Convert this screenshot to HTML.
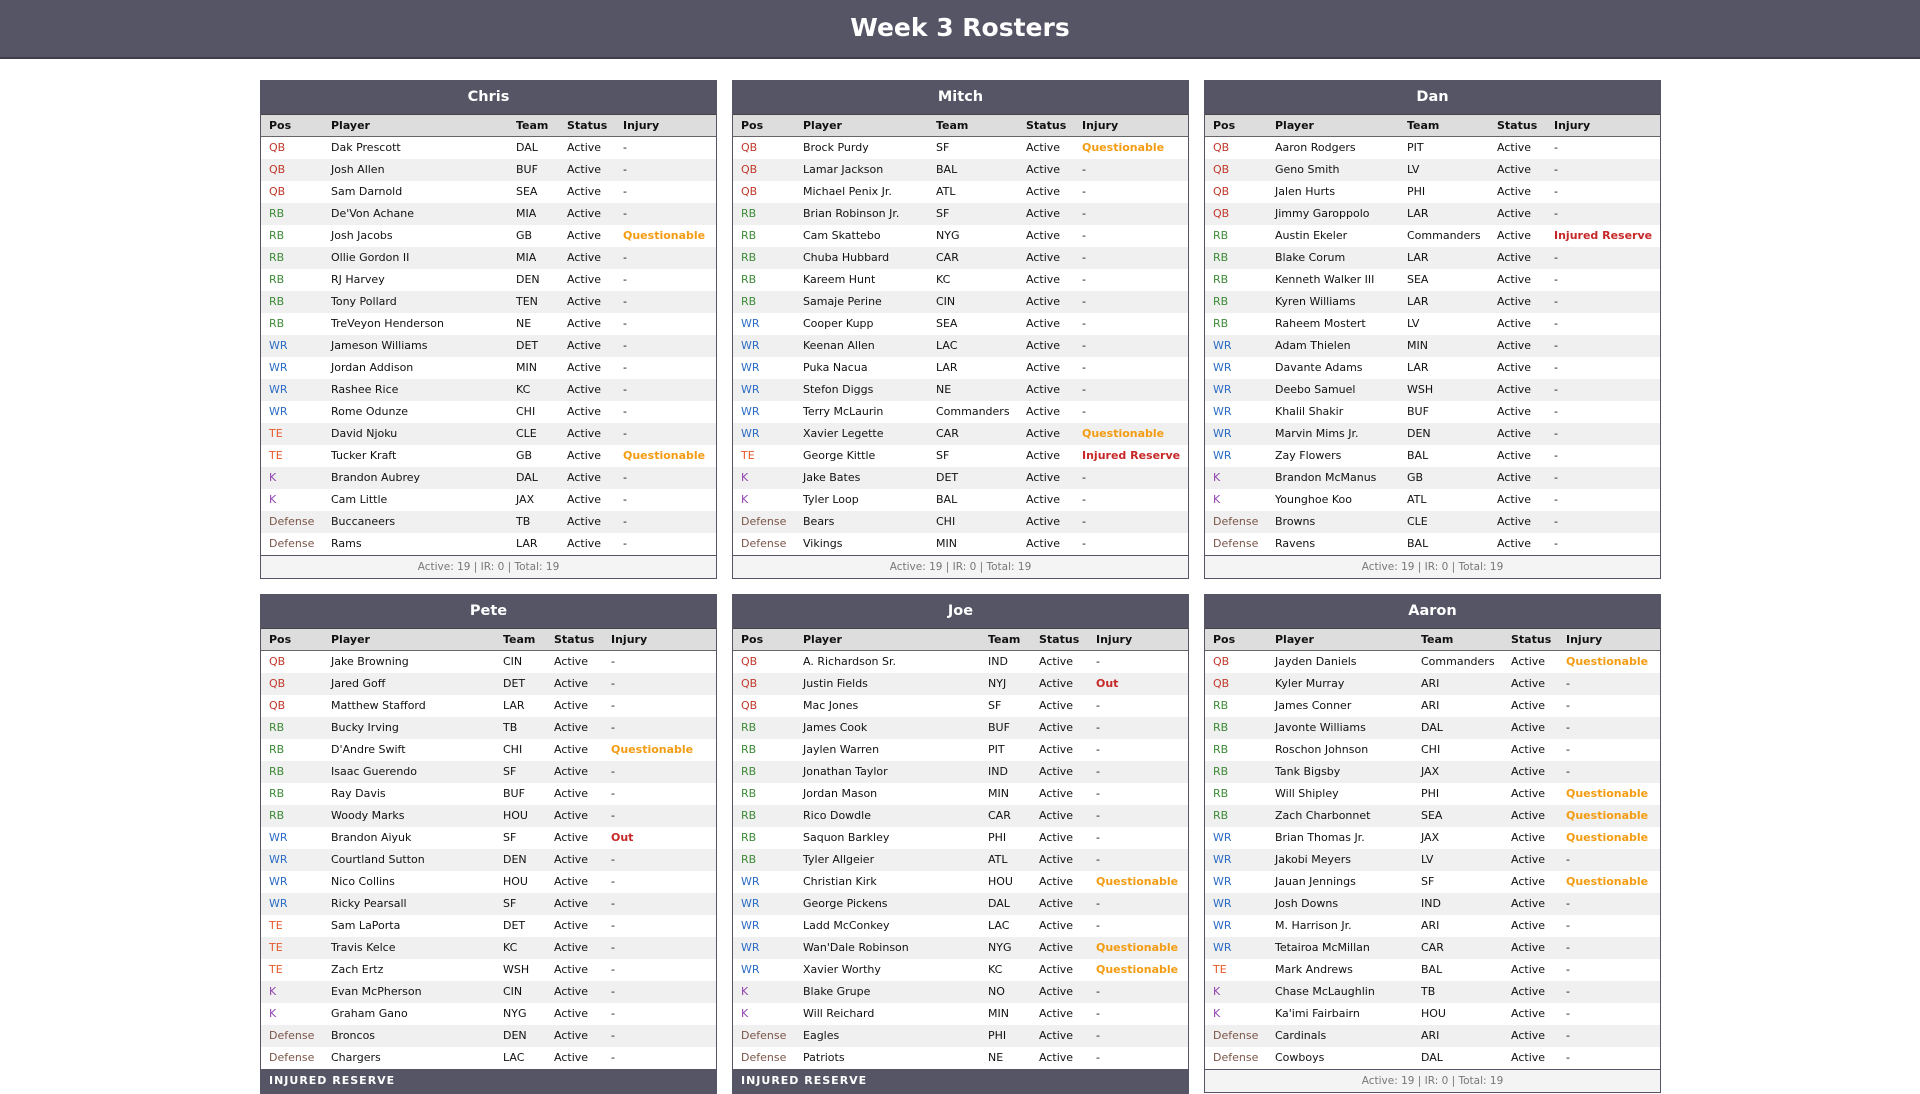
<!DOCTYPE html>
<html><head><meta charset="utf-8"><style>
*{box-sizing:border-box;margin:0;padding:0}
body{width:1920px;height:1080px;overflow:hidden;background:#fff;font-family:"DejaVu Sans","Liberation Sans",sans-serif;font-size:11px;color:#111}
.top{height:59px;background:#565566;border-bottom:2px solid #3e3e4c;color:#fff;text-align:center;font-weight:bold;font-size:25px;line-height:56px}
.card{position:absolute;width:457px;border:1px solid #565566;background:#fff}
.card h2{background:#565566;color:#fff;text-align:center;font-size:14.5px;height:33px;line-height:33px;font-weight:bold}
table{width:100%;border-collapse:collapse;table-layout:fixed}
th{background:#ddd;text-align:left;font-weight:bold;height:22px;padding-left:8px;border-top:1px solid #444;border-bottom:1px solid #666;white-space:nowrap}
td{height:22px;padding-left:8px;white-space:nowrap;overflow:hidden}
tr:nth-child(odd) td{background:#f0f0f0}
.f{background:#f4f4f4;border-top:1px solid #565566;text-align:center;color:#777;height:23px;line-height:22px;font-size:10.5px}
.q{color:#c0392b}.r{color:#3d8b37}.w{color:#2b6cc4}.t{color:#e8572a}.k{color:#8e44ad}.d{color:#7b5548}
.Q{color:#f39c12;font-weight:bold}.X{color:#c62828;font-weight:bold}
.ir{background:#565566;color:#fff;font-weight:bold;height:24px;line-height:24px;padding-left:8px;letter-spacing:1px}
</style></head><body>
<div class="top">Week 3 Rosters</div>

<div class="card" style="left:260px;top:80px"><h2>Chris</h2><table><colgroup><col style="width:62px"><col style="width:185px"><col style="width:51px"><col style="width:56px"><col></colgroup>
<tr><th>Pos</th><th>Player</th><th>Team</th><th>Status</th><th>Injury</th></tr>
<tr><td class="q">QB</td><td>Dak Prescott</td><td>DAL</td><td>Active</td><td>-</td></tr>
<tr><td class="q">QB</td><td>Josh Allen</td><td>BUF</td><td>Active</td><td>-</td></tr>
<tr><td class="q">QB</td><td>Sam Darnold</td><td>SEA</td><td>Active</td><td>-</td></tr>
<tr><td class="r">RB</td><td>De'Von Achane</td><td>MIA</td><td>Active</td><td>-</td></tr>
<tr><td class="r">RB</td><td>Josh Jacobs</td><td>GB</td><td>Active</td><td class="Q">Questionable</td></tr>
<tr><td class="r">RB</td><td>Ollie Gordon II</td><td>MIA</td><td>Active</td><td>-</td></tr>
<tr><td class="r">RB</td><td>RJ Harvey</td><td>DEN</td><td>Active</td><td>-</td></tr>
<tr><td class="r">RB</td><td>Tony Pollard</td><td>TEN</td><td>Active</td><td>-</td></tr>
<tr><td class="r">RB</td><td>TreVeyon Henderson</td><td>NE</td><td>Active</td><td>-</td></tr>
<tr><td class="w">WR</td><td>Jameson Williams</td><td>DET</td><td>Active</td><td>-</td></tr>
<tr><td class="w">WR</td><td>Jordan Addison</td><td>MIN</td><td>Active</td><td>-</td></tr>
<tr><td class="w">WR</td><td>Rashee Rice</td><td>KC</td><td>Active</td><td>-</td></tr>
<tr><td class="w">WR</td><td>Rome Odunze</td><td>CHI</td><td>Active</td><td>-</td></tr>
<tr><td class="t">TE</td><td>David Njoku</td><td>CLE</td><td>Active</td><td>-</td></tr>
<tr><td class="t">TE</td><td>Tucker Kraft</td><td>GB</td><td>Active</td><td class="Q">Questionable</td></tr>
<tr><td class="k">K</td><td>Brandon Aubrey</td><td>DAL</td><td>Active</td><td>-</td></tr>
<tr><td class="k">K</td><td>Cam Little</td><td>JAX</td><td>Active</td><td>-</td></tr>
<tr><td class="d">Defense</td><td>Buccaneers</td><td>TB</td><td>Active</td><td>-</td></tr>
<tr><td class="d">Defense</td><td>Rams</td><td>LAR</td><td>Active</td><td>-</td></tr>
</table><div class="f">Active: 19 | IR: 0 | Total: 19</div></div>

<div class="card" style="left:732px;top:80px"><h2>Mitch</h2><table><colgroup><col style="width:62px"><col style="width:133px"><col style="width:90px"><col style="width:56px"><col></colgroup>
<tr><th>Pos</th><th>Player</th><th>Team</th><th>Status</th><th>Injury</th></tr>
<tr><td class="q">QB</td><td>Brock Purdy</td><td>SF</td><td>Active</td><td class="Q">Questionable</td></tr>
<tr><td class="q">QB</td><td>Lamar Jackson</td><td>BAL</td><td>Active</td><td>-</td></tr>
<tr><td class="q">QB</td><td>Michael Penix Jr.</td><td>ATL</td><td>Active</td><td>-</td></tr>
<tr><td class="r">RB</td><td>Brian Robinson Jr.</td><td>SF</td><td>Active</td><td>-</td></tr>
<tr><td class="r">RB</td><td>Cam Skattebo</td><td>NYG</td><td>Active</td><td>-</td></tr>
<tr><td class="r">RB</td><td>Chuba Hubbard</td><td>CAR</td><td>Active</td><td>-</td></tr>
<tr><td class="r">RB</td><td>Kareem Hunt</td><td>KC</td><td>Active</td><td>-</td></tr>
<tr><td class="r">RB</td><td>Samaje Perine</td><td>CIN</td><td>Active</td><td>-</td></tr>
<tr><td class="w">WR</td><td>Cooper Kupp</td><td>SEA</td><td>Active</td><td>-</td></tr>
<tr><td class="w">WR</td><td>Keenan Allen</td><td>LAC</td><td>Active</td><td>-</td></tr>
<tr><td class="w">WR</td><td>Puka Nacua</td><td>LAR</td><td>Active</td><td>-</td></tr>
<tr><td class="w">WR</td><td>Stefon Diggs</td><td>NE</td><td>Active</td><td>-</td></tr>
<tr><td class="w">WR</td><td>Terry McLaurin</td><td>Commanders</td><td>Active</td><td>-</td></tr>
<tr><td class="w">WR</td><td>Xavier Legette</td><td>CAR</td><td>Active</td><td class="Q">Questionable</td></tr>
<tr><td class="t">TE</td><td>George Kittle</td><td>SF</td><td>Active</td><td class="X">Injured Reserve</td></tr>
<tr><td class="k">K</td><td>Jake Bates</td><td>DET</td><td>Active</td><td>-</td></tr>
<tr><td class="k">K</td><td>Tyler Loop</td><td>BAL</td><td>Active</td><td>-</td></tr>
<tr><td class="d">Defense</td><td>Bears</td><td>CHI</td><td>Active</td><td>-</td></tr>
<tr><td class="d">Defense</td><td>Vikings</td><td>MIN</td><td>Active</td><td>-</td></tr>
</table><div class="f">Active: 19 | IR: 0 | Total: 19</div></div>

<div class="card" style="left:1204px;top:80px"><h2>Dan</h2><table><colgroup><col style="width:62px"><col style="width:132px"><col style="width:90px"><col style="width:57px"><col></colgroup>
<tr><th>Pos</th><th>Player</th><th>Team</th><th>Status</th><th>Injury</th></tr>
<tr><td class="q">QB</td><td>Aaron Rodgers</td><td>PIT</td><td>Active</td><td>-</td></tr>
<tr><td class="q">QB</td><td>Geno Smith</td><td>LV</td><td>Active</td><td>-</td></tr>
<tr><td class="q">QB</td><td>Jalen Hurts</td><td>PHI</td><td>Active</td><td>-</td></tr>
<tr><td class="q">QB</td><td>Jimmy Garoppolo</td><td>LAR</td><td>Active</td><td>-</td></tr>
<tr><td class="r">RB</td><td>Austin Ekeler</td><td>Commanders</td><td>Active</td><td class="X">Injured Reserve</td></tr>
<tr><td class="r">RB</td><td>Blake Corum</td><td>LAR</td><td>Active</td><td>-</td></tr>
<tr><td class="r">RB</td><td>Kenneth Walker III</td><td>SEA</td><td>Active</td><td>-</td></tr>
<tr><td class="r">RB</td><td>Kyren Williams</td><td>LAR</td><td>Active</td><td>-</td></tr>
<tr><td class="r">RB</td><td>Raheem Mostert</td><td>LV</td><td>Active</td><td>-</td></tr>
<tr><td class="w">WR</td><td>Adam Thielen</td><td>MIN</td><td>Active</td><td>-</td></tr>
<tr><td class="w">WR</td><td>Davante Adams</td><td>LAR</td><td>Active</td><td>-</td></tr>
<tr><td class="w">WR</td><td>Deebo Samuel</td><td>WSH</td><td>Active</td><td>-</td></tr>
<tr><td class="w">WR</td><td>Khalil Shakir</td><td>BUF</td><td>Active</td><td>-</td></tr>
<tr><td class="w">WR</td><td>Marvin Mims Jr.</td><td>DEN</td><td>Active</td><td>-</td></tr>
<tr><td class="w">WR</td><td>Zay Flowers</td><td>BAL</td><td>Active</td><td>-</td></tr>
<tr><td class="k">K</td><td>Brandon McManus</td><td>GB</td><td>Active</td><td>-</td></tr>
<tr><td class="k">K</td><td>Younghoe Koo</td><td>ATL</td><td>Active</td><td>-</td></tr>
<tr><td class="d">Defense</td><td>Browns</td><td>CLE</td><td>Active</td><td>-</td></tr>
<tr><td class="d">Defense</td><td>Ravens</td><td>BAL</td><td>Active</td><td>-</td></tr>
</table><div class="f">Active: 19 | IR: 0 | Total: 19</div></div>

<div class="card" style="left:260px;top:594px"><h2>Pete</h2><table><colgroup><col style="width:62px"><col style="width:172px"><col style="width:51px"><col style="width:57px"><col></colgroup>
<tr><th>Pos</th><th>Player</th><th>Team</th><th>Status</th><th>Injury</th></tr>
<tr><td class="q">QB</td><td>Jake Browning</td><td>CIN</td><td>Active</td><td>-</td></tr>
<tr><td class="q">QB</td><td>Jared Goff</td><td>DET</td><td>Active</td><td>-</td></tr>
<tr><td class="q">QB</td><td>Matthew Stafford</td><td>LAR</td><td>Active</td><td>-</td></tr>
<tr><td class="r">RB</td><td>Bucky Irving</td><td>TB</td><td>Active</td><td>-</td></tr>
<tr><td class="r">RB</td><td>D'Andre Swift</td><td>CHI</td><td>Active</td><td class="Q">Questionable</td></tr>
<tr><td class="r">RB</td><td>Isaac Guerendo</td><td>SF</td><td>Active</td><td>-</td></tr>
<tr><td class="r">RB</td><td>Ray Davis</td><td>BUF</td><td>Active</td><td>-</td></tr>
<tr><td class="r">RB</td><td>Woody Marks</td><td>HOU</td><td>Active</td><td>-</td></tr>
<tr><td class="w">WR</td><td>Brandon Aiyuk</td><td>SF</td><td>Active</td><td class="X">Out</td></tr>
<tr><td class="w">WR</td><td>Courtland Sutton</td><td>DEN</td><td>Active</td><td>-</td></tr>
<tr><td class="w">WR</td><td>Nico Collins</td><td>HOU</td><td>Active</td><td>-</td></tr>
<tr><td class="w">WR</td><td>Ricky Pearsall</td><td>SF</td><td>Active</td><td>-</td></tr>
<tr><td class="t">TE</td><td>Sam LaPorta</td><td>DET</td><td>Active</td><td>-</td></tr>
<tr><td class="t">TE</td><td>Travis Kelce</td><td>KC</td><td>Active</td><td>-</td></tr>
<tr><td class="t">TE</td><td>Zach Ertz</td><td>WSH</td><td>Active</td><td>-</td></tr>
<tr><td class="k">K</td><td>Evan McPherson</td><td>CIN</td><td>Active</td><td>-</td></tr>
<tr><td class="k">K</td><td>Graham Gano</td><td>NYG</td><td>Active</td><td>-</td></tr>
<tr><td class="d">Defense</td><td>Broncos</td><td>DEN</td><td>Active</td><td>-</td></tr>
<tr><td class="d">Defense</td><td>Chargers</td><td>LAC</td><td>Active</td><td>-</td></tr>
</table><div class="ir">INJURED RESERVE</div></div>

<div class="card" style="left:732px;top:594px"><h2>Joe</h2><table><colgroup><col style="width:62px"><col style="width:185px"><col style="width:51px"><col style="width:57px"><col></colgroup>
<tr><th>Pos</th><th>Player</th><th>Team</th><th>Status</th><th>Injury</th></tr>
<tr><td class="q">QB</td><td>A. Richardson Sr.</td><td>IND</td><td>Active</td><td>-</td></tr>
<tr><td class="q">QB</td><td>Justin Fields</td><td>NYJ</td><td>Active</td><td class="X">Out</td></tr>
<tr><td class="q">QB</td><td>Mac Jones</td><td>SF</td><td>Active</td><td>-</td></tr>
<tr><td class="r">RB</td><td>James Cook</td><td>BUF</td><td>Active</td><td>-</td></tr>
<tr><td class="r">RB</td><td>Jaylen Warren</td><td>PIT</td><td>Active</td><td>-</td></tr>
<tr><td class="r">RB</td><td>Jonathan Taylor</td><td>IND</td><td>Active</td><td>-</td></tr>
<tr><td class="r">RB</td><td>Jordan Mason</td><td>MIN</td><td>Active</td><td>-</td></tr>
<tr><td class="r">RB</td><td>Rico Dowdle</td><td>CAR</td><td>Active</td><td>-</td></tr>
<tr><td class="r">RB</td><td>Saquon Barkley</td><td>PHI</td><td>Active</td><td>-</td></tr>
<tr><td class="r">RB</td><td>Tyler Allgeier</td><td>ATL</td><td>Active</td><td>-</td></tr>
<tr><td class="w">WR</td><td>Christian Kirk</td><td>HOU</td><td>Active</td><td class="Q">Questionable</td></tr>
<tr><td class="w">WR</td><td>George Pickens</td><td>DAL</td><td>Active</td><td>-</td></tr>
<tr><td class="w">WR</td><td>Ladd McConkey</td><td>LAC</td><td>Active</td><td>-</td></tr>
<tr><td class="w">WR</td><td>Wan'Dale Robinson</td><td>NYG</td><td>Active</td><td class="Q">Questionable</td></tr>
<tr><td class="w">WR</td><td>Xavier Worthy</td><td>KC</td><td>Active</td><td class="Q">Questionable</td></tr>
<tr><td class="k">K</td><td>Blake Grupe</td><td>NO</td><td>Active</td><td>-</td></tr>
<tr><td class="k">K</td><td>Will Reichard</td><td>MIN</td><td>Active</td><td>-</td></tr>
<tr><td class="d">Defense</td><td>Eagles</td><td>PHI</td><td>Active</td><td>-</td></tr>
<tr><td class="d">Defense</td><td>Patriots</td><td>NE</td><td>Active</td><td>-</td></tr>
</table><div class="ir">INJURED RESERVE</div></div>

<div class="card" style="left:1204px;top:594px"><h2>Aaron</h2><table><colgroup><col style="width:62px"><col style="width:146px"><col style="width:90px"><col style="width:55px"><col></colgroup>
<tr><th>Pos</th><th>Player</th><th>Team</th><th>Status</th><th>Injury</th></tr>
<tr><td class="q">QB</td><td>Jayden Daniels</td><td>Commanders</td><td>Active</td><td class="Q">Questionable</td></tr>
<tr><td class="q">QB</td><td>Kyler Murray</td><td>ARI</td><td>Active</td><td>-</td></tr>
<tr><td class="r">RB</td><td>James Conner</td><td>ARI</td><td>Active</td><td>-</td></tr>
<tr><td class="r">RB</td><td>Javonte Williams</td><td>DAL</td><td>Active</td><td>-</td></tr>
<tr><td class="r">RB</td><td>Roschon Johnson</td><td>CHI</td><td>Active</td><td>-</td></tr>
<tr><td class="r">RB</td><td>Tank Bigsby</td><td>JAX</td><td>Active</td><td>-</td></tr>
<tr><td class="r">RB</td><td>Will Shipley</td><td>PHI</td><td>Active</td><td class="Q">Questionable</td></tr>
<tr><td class="r">RB</td><td>Zach Charbonnet</td><td>SEA</td><td>Active</td><td class="Q">Questionable</td></tr>
<tr><td class="w">WR</td><td>Brian Thomas Jr.</td><td>JAX</td><td>Active</td><td class="Q">Questionable</td></tr>
<tr><td class="w">WR</td><td>Jakobi Meyers</td><td>LV</td><td>Active</td><td>-</td></tr>
<tr><td class="w">WR</td><td>Jauan Jennings</td><td>SF</td><td>Active</td><td class="Q">Questionable</td></tr>
<tr><td class="w">WR</td><td>Josh Downs</td><td>IND</td><td>Active</td><td>-</td></tr>
<tr><td class="w">WR</td><td>M. Harrison Jr.</td><td>ARI</td><td>Active</td><td>-</td></tr>
<tr><td class="w">WR</td><td>Tetairoa McMillan</td><td>CAR</td><td>Active</td><td>-</td></tr>
<tr><td class="t">TE</td><td>Mark Andrews</td><td>BAL</td><td>Active</td><td>-</td></tr>
<tr><td class="k">K</td><td>Chase McLaughlin</td><td>TB</td><td>Active</td><td>-</td></tr>
<tr><td class="k">K</td><td>Ka'imi Fairbairn</td><td>HOU</td><td>Active</td><td>-</td></tr>
<tr><td class="d">Defense</td><td>Cardinals</td><td>ARI</td><td>Active</td><td>-</td></tr>
<tr><td class="d">Defense</td><td>Cowboys</td><td>DAL</td><td>Active</td><td>-</td></tr>
</table><div class="f">Active: 19 | IR: 0 | Total: 19</div></div>
</body></html>
